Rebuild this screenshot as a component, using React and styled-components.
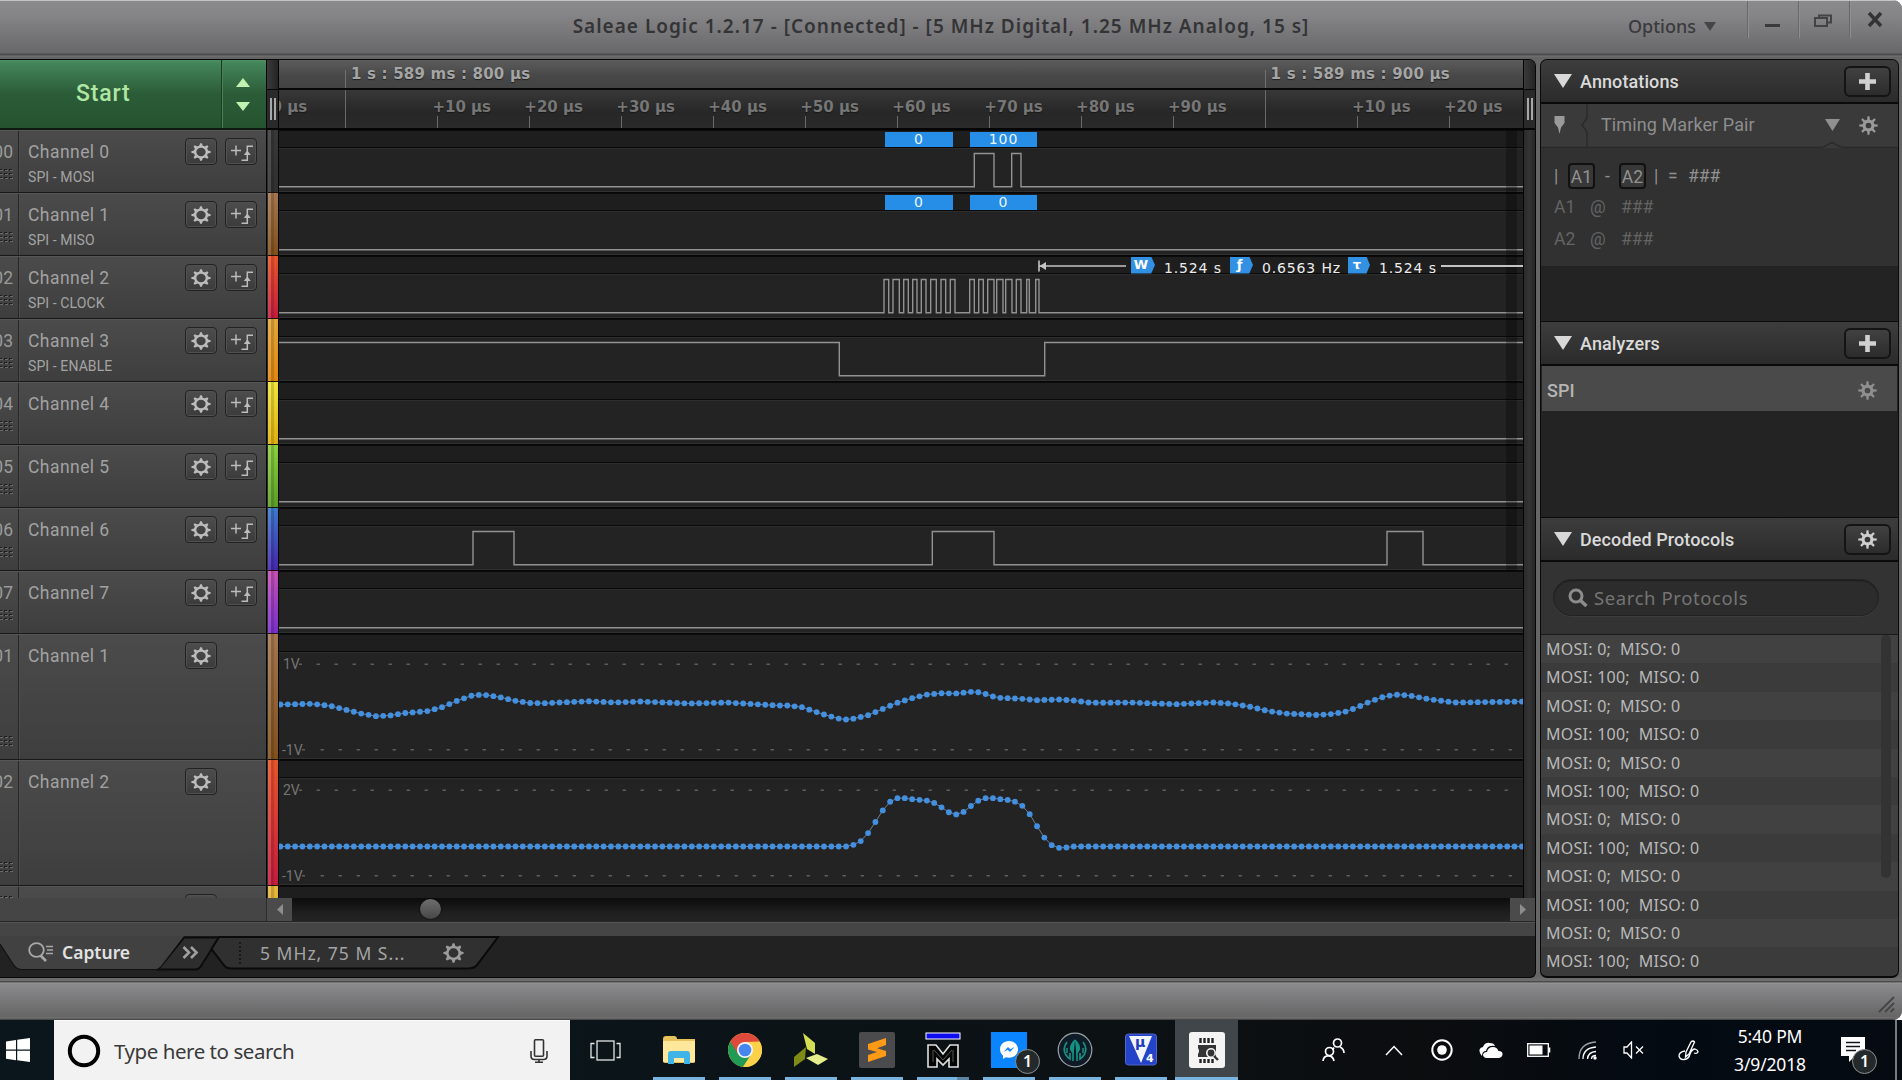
import React from "react";
import styled, { createGlobalStyle, css } from "styled-components";

const roboto = `Roboto, "Liberation Sans", sans-serif`;
const noto = `"Noto Sans", "Open Sans", sans-serif`;
const dejavu = `"DejaVu Sans", Verdana, sans-serif`;

const GlobalStyle = createGlobalStyle`
  * { box-sizing: border-box; }
  body { margin: 0; background: #fff; overflow: hidden; font-family: ${roboto}; }
  svg { display: block; flex: none; }
`;

const Screen = styled.div`
  width: 1902px;
  height: 1080px;
  display: flex;
  flex-direction: column;
  overflow: hidden;
`;

const AppWindow = styled.div`
  height: 1020px;
  display: flex;
  flex-direction: column;
  background: #666667;
  border-radius: 0 9px 9px 0;
  overflow: hidden;
`;

/* ---------- title bar ---------- */

const TitleBar = styled.header`
  height: 59px;
  flex: none;
  display: grid;
  grid-template-columns: 1fr auto 1fr;
  border-top: 1px solid #c4c4c6;
  background: linear-gradient(#8b8b8d 0, #858587 14px, #68686a 52px, #4c4c4d 53px, #4c4c4d 54px, #757577 55px, #646465 56px, #646465 58px);
`;

const Title = styled.h1`
  grid-column: 2;
  margin: 0;
  padding: 13px 20px 0 0;
  font: 600 19px/25px ${noto};
  letter-spacing: 1px;
  white-space: pre;
  color: #343436;
`;

const WindowTools = styled.div`
  justify-self: end;
  display: flex;
  align-items: flex-start;
`;

const OptionsMenu = styled.div`
  display: flex;
  align-items: center;
  gap: 8px;
  padding: 13px 31px 0 0;
  font: 500 18px/24px ${noto};
  color: #3a3a3c;
`;

const WindowButton = styled.div`
  width: ${(p) => p.$w || 51}px;
  height: 37px;
  border-left: 1px solid #68686a;
  box-shadow: inset 1px 0 #8f8f91;
`;

/* ---------- main layout ---------- */

const Body = styled.div`
  height: 919px;
  flex: none;
  display: flex;
  gap: 4px;
`;

const MainPane = styled.main`
  width: 1536px;
  display: flex;
  flex-direction: column;
  border: solid #070707;
  border-width: 1px 1px 1px 0;
  border-radius: 0 7px 6px 0;
  overflow: hidden;
  background: #222;
`;

const Workspace = styled.div`
  height: 838px;
  flex: none;
  display: flex;
  overflow: hidden;
`;

const ChannelColumn = styled.div`
  width: 266px;
  flex: none;
`;

const StartBar = styled.div`
  height: 70px;
  display: flex;
  border-bottom: 2px solid #101a12;
  background: linear-gradient(#4b9062 0, #44855a 3px, #2b5c38 50%, #26532f 100%);
  color: #b0e6a3;
`;

const StartButton = styled.div`
  width: 221px;
  padding-left: 76px;
  font: 500 23px/67px ${roboto};
  letter-spacing: 0.8px;
`;

const StartSteps = styled.div`
  flex: 1;
  display: flex;
  flex-direction: column;
  align-items: center;
  gap: 15px;
  padding: 18px 2px 0 0;
  border-left: 1px solid #1d3c25;
  box-shadow: inset 1px 0 #4a8159;
`;

const ChannelRow = styled.div`
  height: ${(p) => p.$h}px;
  display: flex;
  background: linear-gradient(#4b4b4b, #3e3e3e);
  border-top: 1px solid #565656;
  border-bottom: 1px solid #191919;
`;

const IndexCell = styled.div`
  width: 19px;
  display: flex;
  flex-direction: column;
  justify-content: space-between;
  align-items: flex-end;
  padding: 9px 5px 12px 0;
  border-right: 1px solid #262626;
  font: 400 17.5px/24px ${roboto};
  color: #9b9b9b;
  overflow: hidden;
`;

const ChannelBody = styled.div`
  flex: 1;
  display: flex;
  align-items: flex-start;
  gap: 8px;
  padding: 7px 9px 0 8px;
  border-left: 1px solid #4d4d4d;
`;

const ChannelText = styled.div`
  flex: 1;
  padding-top: 2px;
`;

const ChannelName = styled.div`
  font: 400 17.5px/24px ${roboto};
  letter-spacing: 0.45px;
  color: #a2a2a2;
`;

const ChannelRole = styled.div`
  padding-top: 3px;
  font: 400 14px/20px ${roboto};
  letter-spacing: 0.1px;
  color: #a4a4a4;
`;

const SquareButton = styled.div`
  width: 32px;
  height: 27px;
  display: grid;
  place-items: center;
  border: 1px solid #222;
  border-radius: 4px;
  background: linear-gradient(#4d4d4d, #3b3b3b);
  box-shadow: inset 0 0 0 1px #505050;
  visibility: ${(p) => (p.$hidden ? "hidden" : "visible")};
`;

/* ---------- colour strips / handles ---------- */

const HandleColumn = styled.div`
  width: ${(p) => p.$w}px;
  flex: none;
  border: solid #060606;
  border-width: 0 ${(p) => (p.$left ? 1 : 0)}px 0 1px;
  background: linear-gradient(90deg, #2b2b2b, #343434 50%, #262626);
`;

const HandleTop = styled.div`
  height: 30px;
  border-bottom: 1px solid #060606;
  background: linear-gradient(90deg, #3a3a3a, #242424);
`;

const HandleGrip = styled.div`
  height: 40px;
  display: flex;
  justify-content: center;
  gap: 2px;
  padding-top: 8px;
  border-bottom: 2px solid #060606;
  background: #2a2a2a;
`;

const GripBar = styled.i`
  width: 2px;
  height: 22px;
  background: #a8a8a8;
`;

const ColorStrip = styled.div`
  height: ${(p) => p.$h}px;
  margin-left: 1px;
  border-bottom: 1px solid #1a1208;
  background: linear-gradient(90deg, rgba(255, 255, 255, 0.12) 0 3px, rgba(0, 0, 0, 0.14) 3px 6px, transparent 6px),
    linear-gradient(${(p) => p.$from}, ${(p) => p.$to});
`;

/* ---------- timeline ---------- */

const TrackColumn = styled.div`
  width: 1244px;
  flex: none;
  position: relative;
  overflow: hidden;
`;

const MajorRuler = styled.div`
  height: 30px;
  display: flex;
  padding-left: 66px;
  border-bottom: 2px solid #080808;
  background: linear-gradient(#5c5c5c, #474747 60%, #434343);
`;

const MajorMark = styled.div`
  width: 919.6px;
  flex: none;
  padding-left: 6px;
  font: 700 15px/28px ${dejavu};
  letter-spacing: 0.2px;
  color: #a5a5a5;
  text-shadow: 0 1px 1px #222;
  background: linear-gradient(#707070, #707070) 0 100% / 1px 18px no-repeat;
  white-space: pre;
`;

const MinorRuler = styled.div`
  height: 40px;
  display: flex;
  border-bottom: 2px solid #050505;
  background: linear-gradient(#383838, #272727 60%, #2a2a2a);
  overflow: hidden;
`;

const MinorMark = styled.div`
  width: 91.96px;
  flex: none;
  margin-left: ${(p) => (p.$first ? -25.5 : 0)}px;
  background: linear-gradient(#6a6a6a, #6a6a6a) 0 100% / 1px ${(p) => (p.$major ? 40 : 12)}px no-repeat;
`;

const MinorLabel = styled.span`
  display: block;
  margin-left: -5px;
  font: 700 15px/34px ${dejavu};
  color: #767676;
  text-shadow: 0 1px 1px #181818;
  white-space: pre;
`;

const Track = styled.div`
  height: ${(p) => p.$h}px;
  border-bottom: 1px solid #070707;
`;

const Band = styled.div`
  height: 18px;
  position: relative;
  border-top: 1px solid #0b0b0b;
  border-bottom: 1px solid #090909;
  background: #1e1e1e;
`;

const Lane = styled.div`
  height: ${(p) => p.$h - 19}px;
  background: #232323;
  border-top: 1px solid #2d2d2d;
  border-bottom: 1px solid #303030;
`;

const Bubble = styled.div`
  position: absolute;
  top: 1px;
  left: ${(p) => p.$x}px;
  width: ${(p) => p.$w}px;
  height: 15px;
  background: #268ee6;
  color: #eaf5ff;
  text-align: center;
  font: 400 14px/15px ${dejavu};
  letter-spacing: 0.9px;
`;

const Measurement = styled.div`
  position: absolute;
  top: 0;
  left: 758px;
  right: 0;
  height: 18px;
  display: flex;
  align-items: center;
  gap: 5px;
  z-index: 1;
`;

const Readout = styled.span`
  display: flex;
  flex: none;
`;

const MeasureTag = styled.b`
  width: ${(p) => p.$w}px;
  height: 17px;
  padding-right: 4px;
  background: #3391e3;
  clip-path: polygon(0 0, 84% 0, 100% 50%, 84% 100%, 0 100%);
  color: #fff;
  text-align: center;
  font: 700 13px/16px ${dejavu};
`;

const MeasureText = styled.span`
  width: ${(p) => p.$w}px;
  padding: 3px 0 0 9px;
  font: 400 14px/16px ${dejavu};
  letter-spacing: 0.85px;
  color: #ececec;
  white-space: pre;
`;

const MeasureLine = styled.i`
  flex: 1;
  height: 2px;
  background: #c4c4c4;
`;

const EndShade = styled.div`
  position: absolute;
  left: 1227px;
  top: 71px;
  width: 11px;
  height: 440px;
  background: rgba(0, 0, 0, 0.28);
`;

/* ---------- bottom of main pane ---------- */

const ScrollRow = styled.div`
  height: 24px;
  flex: none;
  display: flex;
  background: #454545;
  border-bottom: 1px solid #262626;
`;

const ScrollSpacer = styled.div`
  width: 267px;
  border-right: 1px solid #2c2c2c;
`;

const ScrollArrow = styled.div`
  width: 25px;
  display: grid;
  place-items: center;
  background: #4b4b4b;
`;

const ScrollTrack = styled.div`
  flex: 1;
  padding-left: 128px;
  background: linear-gradient(#0c0c0c, #202020 70%, #242424);
`;

const ScrollKnob = styled.div`
  width: 21px;
  height: 20px;
  margin-top: 1px;
  border-radius: 50%;
  background: linear-gradient(#6e6e6e, #474747);
  box-shadow: 0 0 2px #000;
`;

const Divider = styled.div`
  height: 14px;
  flex: none;
  background: #454545;
  border-top: 1px solid #555;
`;

const TabBar = styled.div`
  flex: 1;
  position: relative;
  display: flex;
  align-items: flex-start;
`;

const TabShapes = styled.svg`
  position: absolute;
  left: 0;
  top: 0;
`;

const Tab = styled.div`
  position: relative;
  display: flex;
  align-items: center;
`;

const CaptureTab = styled(Tab)`
  width: 171px;
  height: 31px;
  padding-left: 28px;
  gap: 9px;
  color: #e2e2e2;
  font: 600 17.5px/24px ${noto};
`;

const MoreTab = styled(Tab)`
  width: 89px;
  height: 33px;
  padding-left: 11px;
`;

const SettingsTab = styled(Tab)`
  height: 34px;
  gap: 19px;
  color: #a4a4a4;
  font: 400 17.5px/24px ${noto};
`;

const TabText = styled.span`
  width: 164px;
  letter-spacing: 1px;
`;

/* ---------- side panel ---------- */

const SidePanel = styled.aside`
  width: 359px;
  display: flex;
  flex-direction: column;
  border: 1px solid #0a0a0a;
  border-bottom-width: 2px;
  border-radius: 7px;
  overflow: hidden;
  background: #232323;
`;

const PanelHeader = styled.div`
  height: ${(p) => (p.$first ? 44 : 45)}px;
  flex: none;
  display: flex;
  align-items: center;
  padding: 0 7px 0 13px;
  border-bottom: 2px solid #0a0a0a;
  border-top: ${(p) => (p.$first ? 0 : 1)}px solid #0a0a0a;
  background: linear-gradient(#3d3d3d, #2b2b2b);
`;

const PanelTitle = styled.h2`
  flex: 1;
  margin: 0;
  padding: 2px 0 0 8px;
  font: 500 18px/24px ${roboto};
  letter-spacing: 0.1px;
  color: #dadada;
`;

const PanelButton = styled.div`
  width: 47px;
  height: 31px;
  display: grid;
  place-items: center;
  border: 2px solid #141414;
  border-radius: 6px;
  background: linear-gradient(#414141, #2c2c2c);
`;

const MarkerRow = styled.div`
  height: 44px;
  flex: none;
  position: relative;
  display: flex;
  align-items: center;
  padding: 0 20px 2px 13px;
  background: #3a3a3a;
  color: #8d8d8d;
`;

const MarkerOutline = styled.svg`
  position: absolute;
  inset: 0;
`;

const MarkerName = styled.span`
  flex: 1;
  padding-left: 36px;
  font: 400 18px/24px ${roboto};
  letter-spacing: 0.1px;
`;

const MarkerBody = styled.div`
  height: 118px;
  flex: none;
  padding: 13px 0 0 13px;
  background: #313131;
`;

const MarkerLine = styled.div`
  display: flex;
  align-items: center;
  height: ${(p) => (p.$dim ? 32 : 30)}px;
  font: 400 17.5px/24px ${roboto};
  color: ${(p) => (p.$dim ? "#646464" : "#929292")};
`;

const MarkerBit = styled.span`
  width: ${(p) => p.$w}px;
`;

const MarkerBox = styled.span`
  width: 27px;
  height: 26px;
  border: 2px solid #111;
  border-radius: 4px;
  background: #383838;
  text-align: center;
  line-height: 24px;
`;

const EmptyArea = styled.div`
  height: ${(p) => p.$h}px;
  flex: none;
`;

const AnalyzerRow = styled.div`
  height: 45px;
  flex: none;
  display: flex;
  align-items: center;
  justify-content: space-between;
  padding: 4px 20px 0 5px;
  margin: 0 1px;
  background: #4a4a4a;
  color: #b5b5b5;
  font: 500 18px/24px ${roboto};
`;

const SearchArea = styled.div`
  height: 73px;
  flex: none;
  padding: 17px 0 0 12px;
  background: #333;
  border-bottom: 1px solid #1a1a1a;
`;

const SearchField = styled.div`
  width: 326px;
  height: 37px;
  display: flex;
  align-items: center;
  gap: 6px;
  padding-left: 14px;
  border-radius: 19px;
  border: 1px solid #222;
  background: #2c2c2c;
  box-shadow: inset 0 1px 1px #1c1c1c, 0 1px #3d3d3d;
  color: #747474;
  font: 400 18.5px/24px ${noto};
  letter-spacing: 0.6px;
`;

const ProtocolList = styled.div`
  flex: 1;
  position: relative;
  overflow: hidden;
`;

const ProtocolRow = styled.div`
  height: 28.4px;
  padding-left: 5px;
  background: ${(p) => (p.$alt ? "#3b3b3b" : "#414141")};
  color: #b9b9b9;
  font: 400 16px/29px ${noto};
  letter-spacing: 0.25px;
  white-space: pre;
`;

const ListThumb = styled.div`
  position: absolute;
  right: 7px;
  top: 0;
  width: 10px;
  height: 243px;
  border-radius: 5px;
  background: #333;
`;

const StatusBar = styled.footer`
  flex: 1;
  display: flex;
  align-items: flex-end;
  justify-content: flex-end;
  padding: 0 7px 7px 0;
  background: linear-gradient(#6c6c6d 0, #6c6c6d 3px, #4c4c4c 3px, #4c4c4c 4px, #9a9a9b 5px, #8a8a8c 6px, #666566 39px, #7a7a7a 40px, #4a4a4a 41px);
`;

/* ---------- taskbar ---------- */

const Taskbar = styled.nav`
  height: 60px;
  display: flex;
  background: linear-gradient(90deg, #0a161c 0, #0b1419 34%, #0c1113 60%, #0b0d0f 75%, #030a12 88%, #050b11);
  color: #fff;
  font-family: ${noto};
`;

const StartMenu = styled.div`
  width: 54px;
  padding: 18px 0 0 6px;
`;

const CortanaBox = styled.div`
  width: 516px;
  display: flex;
  align-items: center;
  padding: 0 22px 0 13px;
  background: #f2f2f2;
  border-top: 1px solid #fafafa;
`;

const CortanaText = styled.span`
  flex: 1;
  padding-left: 13px;
  font: 400 20.5px/28px ${noto};
  letter-spacing: -0.45px;
  color: #3a3a3a;
`;

const TaskView = styled.div`
  width: 76px;
  padding: 20px 0 0 20px;
`;

const AppCell = styled.div`
  width: ${(p) => (p.$active ? 63 : 52)}px;
  margin-left: ${(p) => (p.$active ? 8 : p.$first ? 7 : 14)}px;
  position: relative;
  display: grid;
  place-items: center;
  border-bottom: 3px solid #79b4e0;
  background: ${(p) => (p.$active ? "#40464a" : "transparent")};
  padding-top: 3px;
  ${(p) =>
    p.$group &&
    css`
      border-image: linear-gradient(90deg, #79b4e0 38px, #5b83a3 39px) 3;
    `}
`;

const CountBadge = styled.span`
  position: absolute;
  right: ${(p) => p.$right}px;
  top: ${(p) => p.$top}px;
  width: 25px;
  height: 25px;
  border-radius: 50%;
  border: 1px solid #8b8f91;
  background: #24292c;
  color: #fff;
  text-align: center;
  font: 600 16px/22px ${noto};
`;

const Tray = styled.div`
  flex: 1;
  display: flex;
  align-items: center;
  padding-left: 84px;
`;

const TraySlot = styled.div`
  width: ${(p) => p.$w}px;
  flex: none;
  position: relative;
`;

const Clock = styled.div`
  width: 100px;
  flex: none;
  text-align: center;
  font: 400 17.5px/28px ${noto};
  letter-spacing: -0.15px;
`;

const ShowDesktop = styled.div`
  width: 7px;
  height: 60px;
  margin-left: auto;
  border-left: 2px solid #777c80;
`;

const Gap = styled.i`
  width: ${(p) => p.$w}px;
  flex: none;
`;

/* ---------- icons ---------- */

const spokes = [0, 45, 90, 135, 180, 225, 270, 315];

function OutlineGear({ w = 20, h = 18, color = "#bcbcbc" }) {
  return (
    <svg width={w} height={h} viewBox="0 0 24 24" preserveAspectRatio="none">
      <circle cx="12" cy="12" r="7.1" fill="none" stroke={color} strokeWidth="3" />
      {spokes.map((a) => (
        <path key={a} d="M9.6 4.4 L11 .4 H13 L14.4 4.4 Z" fill={color} transform={`rotate(${a} 12 12)`} />
      ))}
    </svg>
  );
}

function SolidGear({ size = 19, color = "#8f8f8f" }) {
  return (
    <svg width={size} height={size} viewBox="0 0 24 24">
      <circle cx="12" cy="12" r="5.6" fill="none" stroke={color} strokeWidth="4" />
      {spokes.map((a) => (
        <path key={a} d="M10.3 5.5 L10.7 .3 H13.3 L13.7 5.5 Z" fill={color} transform={`rotate(${a} 12 12)`} />
      ))}
    </svg>
  );
}

function TriggerIcon() {
  return (
    <svg width="26" height="22" viewBox="0 0 26 22" fill="none" stroke="#bcbcbc" strokeWidth="1.5">
      <path d="M3 9.5 H13 M8 4.5 V14.5" />
      <path d="M13.5 19.3 H19.3 V5.3 H25" />
      <path d="M15.8 14 L19.3 9.5 L22.8 14 Z" fill="#bcbcbc" stroke="none" />
    </svg>
  );
}

function Triangle({ w, h, dir = "down", color }) {
  const d = {
    down: `M0 0H${w}L${w / 2} ${h}Z`,
    up: `M0 ${h}H${w}L${w / 2} 0Z`,
    left: `M${w} 0V${h}L0 ${h / 2}Z`,
    right: `M0 0V${h}L${w} ${h / 2}Z`,
  }[dir];
  return (
    <svg width={w} height={h}>
      <path d={d} fill={color} />
    </svg>
  );
}

function DragDots() {
  const dots = [];
  for (let r = 0; r < 3; r++) for (let c = 0; c < 3; c++) dots.push([c, r]);
  return (
    <svg width="14" height="11">
      {dots.map(([c, r]) => (
        <g key={`${c}${r}`}>
          <rect x={c * 5} y={r * 4} width="3" height="2" fill="#1f1f1f" />
          <rect x={c * 5 + 1} y={r * 4 + 1} width="3" height="1" fill="#6b6b6b" />
        </g>
      ))}
    </svg>
  );
}

const PlusIcon = () => (
  <svg width="17" height="17">
    <path d="M8.5 0V17M0 8.5H17" stroke="#d0d0d0" strokeWidth="4.6" />
  </svg>
);

/* ---------- data ---------- */

const X0 = 279;
const px = (origin, scale, xs) => xs.map((x) => origin + x / scale);

const channels = [
  { id: "00", name: "Channel 0", role: "SPI - MOSI", from: "#383838", to: "#303030", edges: px(640, 3, [1003, 1062, 1115, 1143]), bubbles: [[885, 68, "0"], [970, 67, "100"]] },
  { id: "01", name: "Channel 1", role: "SPI - MISO", from: "#a5764e", to: "#80501c", edges: [], bubbles: [[885, 68, "0"], [970, 67, "0"]] },
  {
    id: "02", name: "Channel 2", role: "SPI - CLOCK", from: "#e8552a", to: "#c41c3e", measure: true,
    edges: px(640, 3, [732, 746, 759, 778, 791, 805, 818, 831, 844, 858, 872, 889, 903, 917, 931, 945, 989, 1003, 1016, 1030, 1043, 1062, 1070, 1089, 1097, 1116, 1129, 1143, 1160, 1168, 1187, 1197]),
  },
  { id: "03", name: "Channel 3", role: "SPI - ENABLE", from: "#e3a63a", to: "#e0860e", high: true, edges: [839.3, 1044.7] },
  { id: "04", name: "Channel 4", from: "#efe53c", to: "#e0ae10", edges: [] },
  { id: "05", name: "Channel 5", from: "#8ccf40", to: "#5a9c26", edges: [] },
  { id: "06", name: "Channel 6", from: "#3a7acb", to: "#4526ac", edges: [473, 514, 932.3, 994, 1387, 1423] },
  { id: "07", name: "Channel 7", from: "#c54fb4", to: "#782fcc", edges: [] },
];

const curveA = [
  [280, 704], [312, 703.3], [330, 705.3], [346, 709.3], [361, 713], [376, 715.7], [390, 715], [405, 712.5], [427, 710.7], [442, 706.7],
  [457, 700.3], [471, 695.3], [482, 694], [500, 696.7], [515, 700.3], [530, 702.5], [545, 702.7], [570, 701.5], [590, 700.7], [615, 702],
  [640, 701], [690, 703], [727, 702], [760, 704], [780, 705], [788, 705], [802, 706.7], [824, 714], [838, 718], [846, 719], [853, 718.3],
  [868, 714.7], [883, 708.3], [897, 702.3], [912, 697.7], [927, 694], [942, 692.7], [956, 693], [971, 691.3], [978, 691.7], [985, 693.3],
  [993, 696], [1000, 697.3], [1022, 698.3], [1037, 699.7], [1059, 699], [1074, 700], [1088, 702], [1100, 702.3], [1130, 702], [1176, 703.7],
  [1213, 702], [1230, 703], [1249, 706], [1268, 710.5], [1286, 713], [1316, 714.5], [1332, 713.5], [1346, 711], [1357, 707], [1370, 701],
  [1386, 695.5], [1399, 694], [1412, 695.5], [1431, 699], [1455, 702], [1492, 701.5], [1524, 701],
];

const curveB = [
  [280, 846], [846, 846],
  ...[[220, 673], [242, 662], [264, 638], [286, 605], [308, 570], [330, 544], [352, 533], [374, 533], [396, 536], [418, 538], [440, 540],
    [462, 547], [484, 560], [506, 575], [528, 582], [550, 575], [572, 557], [594, 541], [616, 533], [638, 533], [660, 536], [682, 538],
    [704, 543], [727, 556], [749, 581], [771, 617], [793, 651], [815, 674], [837, 682], [859, 681], [881, 678]].map(([x, y]) => [780 + x / 3, 620 + y / 3]),
  [1524, 846],
];

const analog = [
  { id: "01", name: "Channel 1", from: "#a5764e", to: "#80501c", top: "1V", curve: curveA, y: 653 },
  { id: "02", name: "Channel 2", from: "#e8552a", to: "#c41c3e", top: "2V", curve: curveB, y: 779 },
];

const minorMarks = ["+90", null, "+10", "+20", "+30", "+40", "+50", "+60", "+70", "+80", "+90", null, "+10", "+20"];

const protocols = Array.from({ length: 12 }, (_, i) => (i % 2 ? "MOSI: 100;  MISO: 0" : "MOSI: 0;  MISO: 0"));

/* ---------- traces ---------- */

function DigitalTrace({ edges, high }) {
  const HI = 4.5;
  const LO = 37.7;
  let level = high ? HI : LO;
  let d = `M0 ${level}`;
  edges.forEach((e) => {
    d += `H${(e - X0).toFixed(1)}`;
    level = level === HI ? LO : HI;
    d += `V${level}`;
  });
  d += "H1244";
  return (
    <svg width="1244" height="42">
      <path d={d} fill="none" stroke="#929292" strokeWidth="1.4" />
    </svg>
  );
}

function sample(points, x) {
  let i = 1;
  while (i < points.length - 1 && points[i][0] < x) i++;
  const [ax, ay] = points[i - 1];
  const [bx, by] = points[i];
  return ay + ((by - ay) * (x - ax)) / (bx - ax);
}

const AxisLabel = styled.text`
  font: 400 14px ${roboto};
  fill: #757575;
`;

function AnalogTrace({ curve, top, y }) {
  const pts = [];
  for (let k = 0; k < 170; k++) {
    const x = 280.4 + k * 7.346;
    pts.push([x - X0, sample(curve, x) - y + 0.5]);
  }
  return (
    <svg width="1244" height="105">
      <AxisLabel x="4" y="16">{top}</AxisLabel>
      <AxisLabel x="3" y="101.5">-1V</AxisLabel>
      <path d="M20 11.2H23M37.5 11.2H1235" stroke="#5c5c5c" strokeWidth="1.6" strokeDasharray="3.5 14.5" />
      <path d="M23 96.7H26M41.5 96.7H1235" stroke="#5c5c5c" strokeWidth="1.6" strokeDasharray="3.5 14.5" />
      <polyline points={pts.map((p) => p.map((n) => n.toFixed(1)).join(",")).join(" ")} fill="none" stroke="#6c8096" strokeWidth="1" />
      {pts.map(([x, py]) => (
        <circle key={x} cx={x} cy={py} r="2.9" fill="#4490e0" />
      ))}
    </svg>
  );
}

/* ---------- sections ---------- */

function Channel({ id, name, role, h, analogOnly }) {
  return (
    <ChannelRow $h={h}>
      <IndexCell>
        {id}
        <DragDots />
      </IndexCell>
      <ChannelBody>
        <ChannelText>
          <ChannelName>{name}</ChannelName>
          {role && <ChannelRole>{role}</ChannelRole>}
        </ChannelText>
        <SquareButton><OutlineGear /></SquareButton>
        <SquareButton $hidden={analogOnly}><TriggerIcon /></SquareButton>
      </ChannelBody>
    </ChannelRow>
  );
}

function PulseMeasurement() {
  return (
    <Measurement>
      <svg width="89" height="18">
        <path d="M2 3.5V14.5M2 9H89" stroke="#c4c4c4" strokeWidth="1.6" />
        <path d="M2.5 9L9 5V13Z" fill="#c4c4c4" />
      </svg>
      <Readout>
        <MeasureTag $w={24}>W</MeasureTag>
        <MeasureText $w={75}>1.524 s</MeasureText>
        <MeasureTag $w={23}>ƒ</MeasureTag>
        <MeasureText $w={95}>0.6563 Hz</MeasureText>
        <MeasureTag $w={22}>τ</MeasureTag>
        <MeasureText $w={66}>1.524 s</MeasureText>
      </Readout>
      <MeasureLine />
    </Measurement>
  );
}

function Timeline() {
  return (
    <TrackColumn>
      <MajorRuler>
        <MajorMark>1 s : 589 ms : 800 µs</MajorMark>
        <MajorMark>1 s : 589 ms : 900 µs</MajorMark>
      </MajorRuler>
      <MinorRuler>
        {minorMarks.map((m, i) => (
          <MinorMark key={i} $first={i === 0} $major={!m}>
            {m && <MinorLabel>{`${m} µs`}</MinorLabel>}
          </MinorMark>
        ))}
      </MinorRuler>
      {channels.map((c) => (
        <Track key={c.id} $h={63}>
          <Band>
            {(c.bubbles || []).map(([x, w, t]) => (
              <Bubble key={x} $x={x - X0} $w={w}>{t}</Bubble>
            ))}
            {c.measure && <PulseMeasurement />}
          </Band>
          <Lane $h={63}><DigitalTrace edges={c.edges} high={c.high} /></Lane>
        </Track>
      ))}
      {analog.map((a) => (
        <Track key={a.name} $h={126}>
          <Band />
          <Lane $h={126}><AnalogTrace {...a} /></Lane>
        </Track>
      ))}
      <Track $h={126}><Band /></Track>
      <EndShade />
    </TrackColumn>
  );
}

function Main() {
  return (
    <MainPane>
      <Workspace>
        <ChannelColumn>
          <StartBar>
            <StartButton>Start</StartButton>
            <StartSteps>
              <Triangle w={14} h={9} dir="up" color="#c2f2b2" />
              <Triangle w={14} h={9} color="#c2f2b2" />
            </StartSteps>
          </StartBar>
          {channels.map((c) => <Channel key={c.id} {...c} h={63} />)}
          {analog.map((c) => <Channel key={c.id} {...c} h={126} analogOnly />)}
          <Channel id="" name="" h={126} analogOnly />
        </ChannelColumn>
        <HandleColumn $w={13} $left>
          <HandleTop />
          <HandleGrip><GripBar /><GripBar /></HandleGrip>
          {channels.map((c) => <ColorStrip key={c.id} $h={63} $from={c.from} $to={c.to} />)}
          {analog.map((c) => <ColorStrip key={c.id} $h={126} $from={c.from} $to={c.to} />)}
          <ColorStrip $h={126} $from="#e3b63a" $to="#e0860e" />
        </HandleColumn>
        <Timeline />
        <HandleColumn $w={12}>
          <HandleTop />
          <HandleGrip><GripBar /><GripBar /></HandleGrip>
        </HandleColumn>
      </Workspace>
      <ScrollRow>
        <ScrollSpacer />
        <ScrollArrow><Triangle w={6} h={11} dir="left" color="#8d8d8d" /></ScrollArrow>
        <ScrollTrack><ScrollKnob /></ScrollTrack>
        <ScrollArrow><Triangle w={6} h={11} dir="right" color="#8d8d8d" /></ScrollArrow>
      </ScrollRow>
      <Divider />
      <TabBar>
        <TabShapes width="520" height="40">
          <path d="M158 33.5L184 1.5H219L201 30Q199 33.5 195 33.5Z" fill="#2d2d2d" stroke="#0c0c0c" strokeWidth="2" />
          <path d="M0 -1V8L13 28Q16 33 21 33.5H152Q158 33.5 161 30L184 0V-1Z" fill="#414141" />
          <path d="M0 8L13 28Q16 33 21 33.5H158" fill="none" stroke="#111" strokeWidth="1.2" />
          <path d="M219 1L211.5 13L223 28Q226 32.5 231 32.5H468Q474 32.5 477 29L498 1Z" fill="#303030" stroke="#0a0a0a" strokeWidth="2" />
          <path d="M240 6V28" stroke="#111" strokeWidth="1.5" strokeDasharray="2 2" />
        </TabShapes>
        <CaptureTab>
          <svg width="25" height="20" fill="none" stroke="#a8a8a8" strokeWidth="1.8">
            <ellipse cx="8.5" cy="8" rx="7.3" ry="6.8" />
            <path d="M12.5 13.5L18 19" strokeWidth="2.6" />
            <path d="M18 4.5H25M19 8H25M18 11.5H25" strokeWidth="1.4" />
          </svg>
          Capture
        </CaptureTab>
        <MoreTab>
          <svg width="17" height="13" fill="none" stroke="#a0a0a0" strokeWidth="2.6">
            <path d="M1.5 1L7 6.5L1.5 12M9 1L14.5 6.5L9 12" />
          </svg>
        </MoreTab>
        <SettingsTab>
          <TabText>5 MHz, 75 M S...</TabText>
          <OutlineGear w={21} h={20} color="#9c9c9c" />
        </SettingsTab>
      </TabBar>
    </MainPane>
  );
}

function Side() {
  return (
    <SidePanel>
      <PanelHeader $first>
        <Triangle w={18} h={14} color="#d8d8d8" />
        <PanelTitle>Annotations</PanelTitle>
        <PanelButton><PlusIcon /></PanelButton>
      </PanelHeader>
      <MarkerRow>
        <MarkerOutline width="357" height="44" fill="none" stroke="#292929" strokeWidth="1.3">
          <path d="M46 0V14L41 21L46 28V44" />
          <path d="M0 43.5H278Q284 43 287 40.5Q291 37 295 40.5Q298 43 305 43.5H357" />
        </MarkerOutline>
        <svg width="11" height="18">
          <path d="M0.5 0H10.5V7L7 11.5L5.5 18L4 11.5L0.5 7Z" fill="#9a9a9a" />
        </svg>
        <MarkerName>Timing Marker Pair</MarkerName>
        <Triangle w={15} h={12} color="#909090" />
        <Gap $w={19} />
        <SolidGear color="#9a9a9a" />
      </MarkerRow>
      <MarkerBody>
        <MarkerLine>
          <MarkerBit $w={14}>|</MarkerBit>
          <MarkerBox>A1</MarkerBox>
          <MarkerBit $w={10} />
          <MarkerBit $w={14}>-</MarkerBit>
          <MarkerBox>A2</MarkerBox>
          <MarkerBit $w={8} />
          <MarkerBit $w={14}>|</MarkerBit>
          <MarkerBit $w={20}>=</MarkerBit>
          ###
        </MarkerLine>
        {["A1", "A2"].map((m) => (
          <MarkerLine key={m} $dim>
            <MarkerBit $w={36}>{m}</MarkerBit>
            <MarkerBit $w={31}>@</MarkerBit>
            ###
          </MarkerLine>
        ))}
      </MarkerBody>
      <EmptyArea $h={55} />
      <PanelHeader>
        <Triangle w={18} h={14} color="#d8d8d8" />
        <PanelTitle>Analyzers</PanelTitle>
        <PanelButton><PlusIcon /></PanelButton>
      </PanelHeader>
      <AnalyzerRow>SPI<SolidGear color="#909090" /></AnalyzerRow>
      <EmptyArea $h={106} />
      <PanelHeader>
        <Triangle w={18} h={14} color="#d8d8d8" />
        <PanelTitle>Decoded Protocols</PanelTitle>
        <PanelButton><SolidGear color="#cfcfcf" /></PanelButton>
      </PanelHeader>
      <SearchArea>
        <SearchField>
          <svg width="20" height="19" fill="none" stroke="#8c8c8c" strokeWidth="3">
            <circle cx="8" cy="8" r="6" />
            <path d="M12.5 12.5L18.5 18" strokeWidth="3.6" />
          </svg>
          Search Protocols
        </SearchField>
      </SearchArea>
      <ProtocolList>
        {protocols.map((t, i) => <ProtocolRow key={i} $alt={i % 2}>{t}</ProtocolRow>)}
        <ListThumb />
      </ProtocolList>
    </SidePanel>
  );
}

/* ---------- taskbar icons ---------- */

const FolderIcon = () => (
  <svg width="34" height="28">
    <path d="M1 3Q1 0 4 0H12Q15 0 15 3H33V26Q33 27 31 27H3Q1 27 1 25Z" fill="#e8c35c" />
    <rect x="1" y="5" width="32" height="21" rx="1" fill="#ffe79c" />
    <path d="M6 28V18Q6 15 9 15H25Q28 15 28 18V28H22V22H12V28Z" fill="#3fb4e6" />
  </svg>
);

const ChromeIcon = () => (
  <svg width="34" height="34" viewBox="-17 -17 34 34">
    <circle r="17" fill="#f9cf3c" />
    <path d="M0 0L-14.7 -8.5A17 17 0 0 0 -2 16.9L6.5 4Z" fill="#219a54" />
    <path d="M-14.7 -8.5A17 17 0 0 1 14.7 -8.5L0 -8L-7 4Z" fill="#e04a3c" />
    <path d="M0 -8H14.9A17 17 0 0 1 -2 16.9L7.5 3Z" fill="#fbd149" />
    <circle r="8" fill="#f4f4f4" />
    <circle r="6.3" fill="#4587ee" />
  </svg>
);

const XilinxIcon = () => (
  <svg width="36" height="34">
    <path d="M10 0L22 10V21L14 16Z" fill="#d3de52" />
    <path d="M13 14L12 26L1 34V24Z" fill="#7f8a14" />
    <path d="M13 25L24 21L35 26L25 32Z" fill="#e6ee8c" />
  </svg>
);

const SublimeIcon = () => (
  <svg width="36" height="36">
    <rect width="36" height="36" rx="2" fill="#4b4b4e" />
    <path d="M9 12L27 6V13L18 16.2L27 19V24L9 30V23L18 20L9 17.5Z" fill="#ff9a16" />
  </svg>
);

const ModelSimIcon = () => (
  <svg width="36" height="36">
    <rect x="1" y="1" width="34" height="6" fill="#0d0df0" stroke="#fff" />
    <path d="M3 13H11L18 22L25 13H33V35H24V27L18 33L12 27V35H3Z" fill="#050505" stroke="#e0e0e0" strokeWidth="1.6" />
    <path d="M8 18V30M28 18V30M9 18L18 28L27 18" stroke="#555" fill="none" />
  </svg>
);

const MessengerIcon = () => (
  <svg width="36" height="36">
    <rect width="36" height="36" fill="#0a84ff" />
    <path d="M18 9C12.5 9 9 12.8 9 17.3C9 20 10.3 22 12 23.5V27L15 25.3C16 25.6 17 25.7 18 25.7C23.5 25.7 27 21.8 27 17.3C27 12.8 23.5 9 18 9Z" fill="#fff" />
    <path d="M12.5 20L17 15L19.3 17.3L23.5 15L19 20L16.7 17.7Z" fill="#0a84ff" />
  </svg>
);

const KrakenIcon = () => (
  <svg width="36" height="36" fill="none">
    <circle cx="18" cy="18" r="16.8" fill="#0f1b26" stroke="#9aa3a8" strokeWidth="1.2" />
    <path d="M18 8C14 12 13 15 14 18L16 21V29M18 8C22 12 23 15 22 18L20 21V29" fill="#159183" stroke="#159183" strokeWidth="1.6" />
    <path d="M10 10Q5 17 9 23Q11 26 13 27V21M26 10Q31 17 27 23Q25 26 23 27V21" stroke="#159183" strokeWidth="1.7" />
    <path d="M10 16V21M26 16V21" stroke="#159183" strokeWidth="1.5" />
  </svg>
);

const IconGlyph = styled.text`
  font: 700 ${(p) => p.$size}px ${dejavu};
  fill: ${(p) => p.$color};
`;

const KeilIcon = () => (
  <svg width="32" height="34">
    <rect x="0.5" y="1" width="31" height="31" rx="3" fill="#2343c8" stroke="#5266cc" />
    <path d="M4 3H27L16 30Z" fill="#f2f4ff" />
    <IconGlyph $size={14} $color="#1b3bbb" x="10" y="14">µ</IconGlyph>
    <IconGlyph $size={11} $color="#fff" x="21" y="29">4</IconGlyph>
  </svg>
);

const LogicIcon = () => (
  <svg width="36" height="36">
    <rect width="36" height="36" rx="3" fill="#f4f4f4" />
    <path d="M11.5 6V11M15.5 6V11M19.5 6V11M23.5 6V11M11.5 27V31M15.5 27V31M19.5 27V31M23.5 27V31" stroke="#222" strokeWidth="2.4" />
    <path d="M9 13H27V25H9V22Q11 19 9 16Z" fill="#333" />
    <circle cx="22" cy="21" r="4.2" fill="#333" stroke="#f4f4f4" strokeWidth="1.6" />
    <path d="M25 24L29 28" stroke="#333" strokeWidth="2.4" />
  </svg>
);

const apps = [
  { id: "files", Icon: FolderIcon },
  { id: "chrome", Icon: ChromeIcon },
  { id: "xilinx", Icon: XilinxIcon },
  { id: "sublime", Icon: SublimeIcon },
  { id: "modelsim", Icon: ModelSimIcon, group: true },
  { id: "messenger", Icon: MessengerIcon, badge: "1" },
  { id: "kraken", Icon: KrakenIcon },
  { id: "keil", Icon: KeilIcon },
  { id: "logic", Icon: LogicIcon, active: true },
];

function WindowsTaskbar() {
  return (
    <Taskbar>
      <StartMenu>
        <svg width="24" height="24" fill="#fff">
          <path d="M0 3.5L10 2V11.5H0ZM11.2 1.8L24 0V11.5H11.2ZM0 12.7H10V22.2L0 20.8ZM11.2 12.7H24V24L11.2 22.3Z" />
        </svg>
      </StartMenu>
      <CortanaBox>
        <svg width="34" height="34">
          <circle cx="17" cy="17" r="14.2" fill="none" stroke="#000" strokeWidth="4" />
        </svg>
        <CortanaText>Type here to search</CortanaText>
        <svg width="18" height="24" fill="none" stroke="#333" strokeWidth="1.6">
          <rect x="4.5" y="0.8" width="9" height="16.5" rx="1" />
          <path d="M1 12V17Q1 20.5 4.5 20.5H13.5Q17 20.5 17 17V12M9 20.5V23.3M5 23.3H13" />
        </svg>
      </CortanaBox>
      <TaskView>
        <svg width="31" height="21" fill="none" stroke="#e6e6e6" strokeWidth="1.3">
          <rect x="7" y="1" width="17" height="19" />
          <path d="M4.5 3.5H1V17.5H4.5M26.5 3.5H30V17.5H26.5" />
        </svg>
      </TaskView>
      {apps.map(({ id, Icon, badge, group, active }, i) => (
        <AppCell key={id} $active={active} $group={group} $first={i === 0}>
          <Icon />
          {badge && <CountBadge $right={-5} $top={29}>{badge}</CountBadge>}
        </AppCell>
      ))}
      <Tray>
        <TraySlot $w={63}>
          <svg width="23" height="24" fill="none" stroke="#fff" strokeWidth="1.7">
            <circle cx="15.5" cy="5" r="4" />
            <path d="M12 9.5L10.5 12M18 9Q22 11 22 15" />
            <circle cx="7.5" cy="13.5" r="4" />
            <path d="M1 23Q1.5 18 6 17.8Q11 17.5 12 23" />
          </svg>
        </TraySlot>
        <TraySlot $w={46}>
          <svg width="18" height="11" fill="none" stroke="#fff" strokeWidth="1.5"><path d="M1 10L9 1.5L17 10" /></svg>
        </TraySlot>
        <TraySlot $w={47}>
          <svg width="22" height="22">
            <circle cx="11" cy="11" r="9.7" fill="none" stroke="#fff" strokeWidth="2" />
            <circle cx="11" cy="11" r="4.8" fill="#fff" />
          </svg>
        </TraySlot>
        <TraySlot $w={49}>
          <svg width="25" height="16">
            <path d="M2 11Q0 6 5 5Q7 0 12 1Q16 1 17 4Q9 3 8 9Q4 9 4 14Q3 13 2 11Z" fill="#fff" />
            <path d="M8 16Q5 15 5 12.5Q5.5 9.5 9 10Q10 5 15 5Q19 5 20.5 9Q25 9 24.5 13Q24 15.5 21 16Z" fill="#fff" />
          </svg>
        </TraySlot>
        <TraySlot $w={51}>
          <svg width="24" height="14">
            <rect x="0.7" y="0.7" width="20.6" height="12.6" fill="none" stroke="#fff" strokeWidth="1.3" />
            <rect x="2.5" y="2.5" width="13" height="9" fill="#fff" />
            <path d="M22.5 4.5V9.5" stroke="#fff" strokeWidth="1.6" />
          </svg>
        </TraySlot>
        <TraySlot $w={45}>
          <svg width="20" height="19" fill="none" stroke="#fff" strokeWidth="1.3">
            <path d="M1 18Q1 2 18 1" stroke="#9aa0a4" />
            <path d="M5 18Q5 7 18 6M9.5 18Q10 11 18 10.5M13.5 18Q13.5 14.5 18 14.5" />
            <circle cx="17" cy="17" r="1.7" fill="#fff" stroke="none" />
          </svg>
        </TraySlot>
        <TraySlot $w={55}>
          <svg width="21" height="18" fill="none" stroke="#fff" strokeWidth="1.3">
            <path d="M1 6H4L8.5 1V17L4 12H1ZM13 5.5L20 12.5M20 5.5L13 12.5" />
          </svg>
        </TraySlot>
        <TraySlot $w={42}>
          <svg width="21" height="21" fill="none" stroke="#fff" strokeWidth="1.3">
            <path d="M8 12L13 2Q15 0 16.5 2L11 14L7.5 17ZM7 11Q1 12 1 16Q2 20 6 19.5Q11 19 12 14Q14 9 17 9Q20 10 20 12Q19 14 16 13" />
          </svg>
        </TraySlot>
        <Clock>5:40 PM<br />3/9/2018</Clock>
        <Gap $w={21} />
        <TraySlot $w={25}>
          <svg width="25" height="26">
            <path d="M0 0H24V19H14L8 25V19H0Z" fill="#fff" />
            <path d="M5 5.5H19M5 9.5H19M5 13.5H15" stroke="#10151a" strokeWidth="1.4" />
          </svg>
          <CountBadge $right={-11} $top={12}>1</CountBadge>
        </TraySlot>
        <ShowDesktop />
      </Tray>
    </Taskbar>
  );
}

export default function App() {
  return (
    <Screen>
      <GlobalStyle />
      <AppWindow>
        <TitleBar>
          <Title>Saleae Logic 1.2.17 - [Connected] - [5 MHz Digital, 1.25 MHz Analog, 15 s]</Title>
          <WindowTools>
            <OptionsMenu>Options<Triangle w={12} h={9} color="#454547" /></OptionsMenu>
            <WindowButton>
              <svg width="50" height="37"><rect x="17" y="23" width="15" height="3" fill="#3a3a3c" /></svg>
            </WindowButton>
            <WindowButton>
              <svg width="50" height="37" fill="none" stroke="#434345" strokeWidth="2">
                <rect x="16" y="17" width="12" height="8" />
                <path d="M20 16V14.5H32V21.5H29" />
              </svg>
            </WindowButton>
            <WindowButton $w={53}>
              <svg width="50" height="37"><path d="M19 12L31 25M31 12L19 25" stroke="#333335" strokeWidth="3.4" /></svg>
            </WindowButton>
          </WindowTools>
        </TitleBar>
        <Body>
          <Main />
          <Side />
        </Body>
        <StatusBar>
          <svg width="17" height="17" stroke="#454546" strokeWidth="1.8"><path d="M1 16L16 1M7 16L16 7M12.5 16L16 12.5" /></svg>
        </StatusBar>
      </AppWindow>
      <WindowsTaskbar />
    </Screen>
  );
}
